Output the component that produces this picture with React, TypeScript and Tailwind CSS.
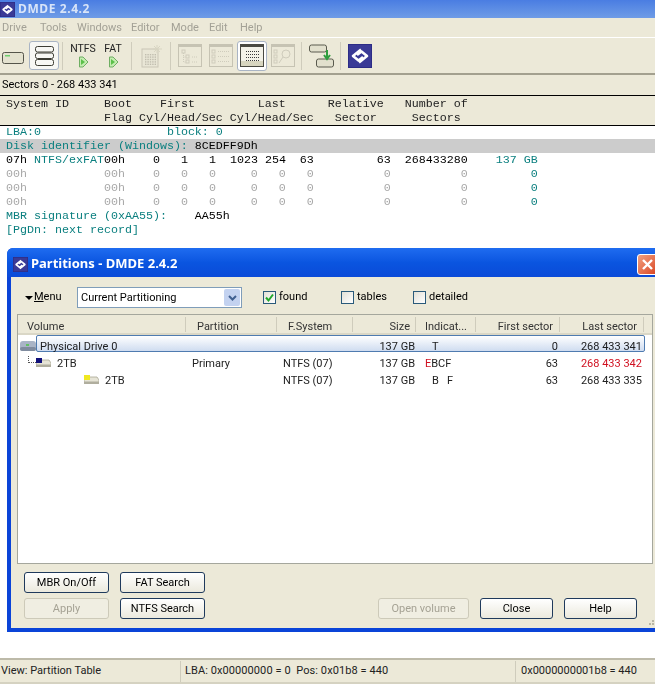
import React from "react";

const ui = { fontFamily: '"Roboto", "Noto Sans", sans-serif' };
const mono = { fontFamily: '"Liberation Mono", monospace', fontSize: "11.67px" };

type Seg = [number, string, string?];
function MonoLine({ segs, className = "" }: { segs: Seg[]; className?: string }) {
  let col = 0;
  const out: React.ReactNode[] = [];
  segs.forEach(([c, t, cls], i) => {
    const gap = " ".repeat(Math.max(0, c - col));
    out.push(<span key={i} className={cls}>{gap + t}</span>);
    col = c + t.length;
  });
  return <div className={"h-[14px] leading-[14px] pl-[6px] whitespace-pre " + className}>{out}</div>;
}

const T = "text-[#0a7f7f]";
const G = "text-[#a8a8a8]";

function Logo({ s = 24 }: { s?: number }) {
  return (
    <svg width={s} height={s} viewBox="0 0 24 24">
      <rect width="24" height="24" fill="#2c2c86" />
      <rect x="1" y="1" width="22" height="22" fill="#3a3a96" />
      <path d="M13 5.500 L5 12 L10.500 16.500 L15 13" fill="none" stroke="#fff" strokeWidth="2.600" strokeLinejoin="round" />
      <path d="M11 18.500 L19 12 L13.500 7.500 L9 11" fill="none" stroke="#fff" strokeWidth="2.600" strokeLinejoin="round" />
    </svg>
  );
}

function HddIcon() {
  return (
    <svg width="22" height="12" viewBox="0 0 22 12">
      <rect x="0.5" y="0.500" width="21" height="11" rx="2" fill="#e4e2cf" stroke="#55554a" />
      <rect x="3" y="3" width="5" height="1.500" fill="#6fcf6f" />
    </svg>
  );
}
function StackIcon() {
  return (
    <svg width="19" height="20" viewBox="0 0 19 20" fill="none" stroke="#3c3c34">
      <rect x="0.5" y="0.500" width="18" height="5.500" rx="2" />
      <rect x="0.5" y="7" width="18" height="5.500" rx="2" />
      <rect x="0.5" y="13.500" width="18" height="6" rx="2" />
    </svg>
  );
}
function Play() {
  return (
    <svg width="11" height="12" viewBox="0 0 11 12">
      <path d="M1.500 1 H5 L10 6 L5 11 H1.500 Z" fill="#c4ecb0" stroke="#6fae62" strokeLinejoin="round" />
      <path d="M3 3 L7 6 L3 9 Z" fill="#5cc04a" />
    </svg>
  );
}
function NewIcon() {
  return (
    <svg width="22" height="24" viewBox="0 0 22 24">
      <rect x="1" y="5" width="16" height="18" fill="#e9e6d6" stroke="#c9c6b6" />
      <g fill="#c0bdaf">
        {[0, 1, 2, 3, 4].map((r) =>
          [0, 1, 2, 3, 4].map((c) => <rect key={r + "-" + c} x={4 + c * 2.4} y={10 + r * 2.4} width="1.400" height="1.400" />)
        )}
      </g>
      <path d="M16 1 V9 M12 5 H21 M13 2 L19 8 M19 2 L13 8" stroke="#d8d5c2" />
    </svg>
  );
}
function ViewIcon({ kind, active }: { kind: string; active?: boolean }) {
  const edge = active ? "#4a4a42" : "#c6c3b3";
  const dot = active ? "#3a3a3a" : "#cfccbc";
  return (
    <svg width="24" height="23" viewBox="0 0 24 23">
      <rect x="0.5" y="0.500" width="23" height="22" fill={active ? "#f3f2e8" : "#ece9d8"} stroke={edge} />
      <rect x="0" y="0" width="24" height="3" fill={edge} />
      {active && <rect x="1" y="17" width="22" height="5" fill="#d8d6c0" />}
      {kind === "tree" && (
        <g fill="none" stroke={dot}>
          <rect x="4" y="6" width="3" height="3" /><rect x="8" y="11" width="3" height="3" /><rect x="8" y="16" width="3" height="3" />
          <path d="M5.500 9 V18 H8 M5.500 13 H8 M14 13 H20 M14 18 H20" strokeDasharray="1 1" />
        </g>
      )}
      {kind === "list" && (
        <g fill="none" stroke={dot}>
          <rect x="3" y="6" width="3" height="3" /><rect x="3" y="11" width="3" height="3" /><rect x="3" y="16" width="3" height="3" />
          <path d="M9 7.500 H20 M9 12.500 H20 M9 17.500 H20" strokeDasharray="1 1" />
        </g>
      )}
      {kind === "detail" && (
        <g stroke={dot}>
          <path d="M6 7.500 H19 M6 10.500 H19 M6 13.500 H19 M6 16.500 H19" strokeDasharray="1 1" />
        </g>
      )}
      {kind === "find" && (
        <g fill="none" stroke={dot}>
          <rect x="3" y="6" width="3" height="3" /><rect x="3" y="11" width="3" height="3" /><rect x="3" y="16" width="3" height="3" />
          <circle cx="15" cy="10" r="4" /><path d="M12 13 L8 19" />
        </g>
      )}
    </svg>
  );
}
function SwapIcon() {
  return (
    <svg width="25" height="24" viewBox="0 0 25 24">
      <rect x="0.5" y="1" width="17" height="7" rx="2" fill="#e2e0cd" stroke="#5a5a4e" />
      <rect x="7.500" y="15" width="17" height="8" rx="2" fill="#e2e0cd" stroke="#5a5a4e" />
      <path d="M18 6 V14 M15 11 L18 15 L21 11" fill="none" stroke="#2f9e3f" strokeWidth="2" />
    </svg>
  );
}
function Sep() {
  return <div className="w-[2px] h-[28px] border-l border-[#cfccbc]" />;
}

function XpBtn({ label, className = "", disabled }: { label: string; className?: string; disabled?: boolean }) {
  return (
    <div
      className={
        "h-[21px] pt-[2px] flex items-center justify-center rounded-[3px] border text-[11px] " +
        (disabled
          ? "border-[#cdcab9] text-[#a5a294] bg-[#f0eee2] "
          : "border-[#1f3a5c] text-black bg-gradient-to-b from-white to-[#ebe9dd] ") +
        className
      }
    >
      {label}
    </div>
  );
}
function Check({ on }: { on?: boolean }) {
  return (
    <div className="w-[13px] h-[13px] border border-[#2a5a7a] bg-gradient-to-br from-[#e2e0d6] to-white flex items-center justify-center">
      {on && (
        <svg width="11" height="11" viewBox="0 0 11 11">
          <path d="M2 5.500 L4.500 8.500 L9 2.500" fill="none" stroke="#22a82a" strokeWidth="2" />
        </svg>
      )}
    </div>
  );
}
function Vol({ color }: { color: string }) {
  return (
    <svg width="15" height="9" viewBox="0 0 15 9">
      <path d="M2 2 H13 L15 5 V9 H0 V5 Z" fill="#e6e4d6" stroke="#a9a795" strokeWidth="0.800" />
      <rect x="0" y="6.500" width="15" height="2.500" fill="#b0ae9e" />
      <rect x="0" y="0" width="6" height="5" fill={color} />
    </svg>
  );
}

const cols = "grid grid-cols-[168px_91px_76px_63px_60px_84px_84px_1fr]";
const head = "pt-[2px] border-r border-[#cfccbc] h-[15px] leading-[15px]";
const row = " h-[17px] pt-[4px] items-center text-[#222]";

export default function App() {
  return (
    <div className="w-[655px] h-[686px] overflow-hidden bg-white relative text-black" style={ui}>
      {/* main title */}
      <div className="h-[18px] bg-gradient-to-b from-[#4a7de2] to-[#6f9ce6] flex items-center">
        <Logo s={15} />
        <span className="ml-[3px] text-[12px] font-bold tracking-[0.6px] text-[#d8e4f8]" style={{ fontFamily: '"Noto Sans", sans-serif' }}>DMDE 2.4.2</span>
      </div>
      {/* menu */}
      <div className="h-[19px] pt-[1px] bg-[#ece9d8] flex items-center pl-[2px] text-[11px] text-[#a3a196]">
        <span className="w-[38px]">Drive</span>
        <span className="w-[37px]">Tools</span>
        <span className="w-[54px]">Windows</span>
        <span className="w-[40px]">Editor</span>
        <span className="w-[38px]">Mode</span>
        <span className="w-[31px]">Edit</span>
        <span>Help</span>
      </div>
      {/* toolbar */}
      <div className="h-[38px] bg-[#ece9d8] border-t border-white border-b-2 border-b-[#a3a08f] flex items-center pl-[2px]">
        <div className="mt-[4px]"><HddIcon /></div>
        <div className="ml-[5px] w-[30px] h-[29px] rounded-[3px] border border-[#a9b4c4] bg-[#f7f7f4] flex items-center justify-center"><StackIcon /></div>
        <div className="ml-[3px]"><Sep /></div>
        <div className="ml-[6px] w-[26px] flex flex-col items-center text-[10.500px] leading-[11px] text-[#222]"><span>NTFS</span><span className="mt-[2px] h-[12px]"><Play /></span></div>
        <div className="ml-[5px] w-[24px] flex flex-col items-center text-[10.500px] leading-[11px] text-[#222]"><span>FAT</span><span className="mt-[2px] h-[12px]"><Play /></span></div>
        <div className="ml-[6px]"><Sep /></div>
        <div className="ml-[8px]"><NewIcon /></div>
        <div className="ml-[7px]"><Sep /></div>
        <div className="ml-[6px]"><ViewIcon kind="tree" /></div>
        <div className="ml-[7px]"><ViewIcon kind="list" /></div>
        <div className="ml-[4px] w-[30px] h-[30px] rounded-[3px] border border-[#a9b4c4] bg-white flex items-center justify-center"><ViewIcon kind="detail" active /></div>
        <div className="ml-[4px]"><ViewIcon kind="find" /></div>
        <div className="ml-[6px]"><Sep /></div>
        <div className="ml-[6px]"><SwapIcon /></div>
        <div className="ml-[6px]"><Sep /></div>
        <div className="ml-[6px]"><Logo s={24} /></div>
      </div>
      {/* sectors */}
      <div className="h-[20px] bg-[#ece9d8] flex items-center pl-[2px] text-[11px]">Sectors 0 - 268 433 341</div>
      {/* table head */}
      <div style={mono}>
        <div className="h-[31px] bg-[#ece9d8] border-y border-black pt-[1px] text-[#222]">
          <MonoLine segs={[[0, "System ID"], [14, "Boot"], [22, "First"], [36, "Last"], [46, "Relative"], [57, "Number of"]]} />
          <MonoLine segs={[[14, "Flag"], [19, "Cyl/Head/Sec"], [32, "Cyl/Head/Sec"], [47, "Sector"], [58, "Sectors"]]} />
        </div>
        <div className="-mt-[1px]">
          <MonoLine segs={[[0, "LBA:0", T], [23, "block: 0", T]]} />
          <MonoLine className="bg-[#cccccc]" segs={[[0, "Disk identifier (Windows):", T], [27, "8CEDFF9Dh"]]} />
          <MonoLine segs={[[0, "07h"], [4, "NTFS/exFAT", T], [14, "00h"], [21, "0"], [25, "1"], [29, "1"], [32, "1023"], [37, "254"], [42, "63"], [53, "63"], [57, "268433280"], [70, "137 GB", T]]} />
          {[0, 1, 2].map((i) => (
            <MonoLine key={i} segs={[[0, "00h", G], [14, "00h", G], [21, "0", G], [25, "0", G], [29, "0", G], [35, "0", G], [39, "0", G], [43, "0", G], [54, "0", G], [65, "0", G], [75, "0", T]]} />
          ))}
          <MonoLine segs={[[0, "MBR signature (0xAA55):", T], [27, "AA55h"]]} />
          <MonoLine segs={[[0, "[PgDn: next record]", T]]} />
        </div>
      </div>

      {/* dialog */}
      <div className="absolute left-[7px] top-[248px] w-[668px] h-[384px] rounded-t-[6px] bg-[#0a44d8] flex flex-col px-[4px] pb-[4px] overflow-hidden">
        <div className="h-[29px] pt-[3px] -mx-[4px] bg-gradient-to-b from-[#1f6cf0] via-[#0a55e0] to-[#0a4ad8] flex items-center pl-[6px] shrink-0">
          <Logo s={15} />
          <span className="ml-[3px] text-[13px] font-bold text-white" style={{ fontFamily: '"Noto Sans", sans-serif' }}>Partitions - DMDE 2.4.2</span>
        </div>
        <div className="flex-1 bg-[#ece9d8] flex flex-col relative">
          {/* controls */}
          <div className="h-[37px] pt-[4px] flex items-center text-[11px] shrink-0">
            <span className="ml-[14px] w-0 h-0 border-x-[4px] border-x-transparent border-t-[4px] border-t-black" />
            <span className="ml-[1px] w-[18px]"><u>M</u>enu</span>
            <div className="ml-[25px] w-[165px] h-[21px] border border-[#7f9db9] bg-white flex items-center pl-[3px] pr-[1px]">
              <span className="flex-1 pt-[1px]">Current Partitioning</span>
              <span className="w-[16px] h-[17px] bg-[#c3d2f0] rounded-[2px] flex items-center justify-center">
                <svg width="9" height="6" viewBox="0 0 9 6"><path d="M1 1 L4.500 4.500 L8 1" fill="none" stroke="#3f5f90" strokeWidth="2" /></svg>
              </span>
            </div>
            <div className="ml-[21px] flex items-center gap-[3px] w-[78px]"><Check on /><span>found</span></div>
            <div className="flex items-center gap-[3px] w-[72px]"><Check /><span>tables</span></div>
            <div className="flex items-center gap-[3px]"><Check /><span>detailed</span></div>
          </div>
          {/* list */}
          <div className="ml-[6px] w-[636px] h-[250px] border border-[#a5a79d] bg-white text-[11px] shrink-0">
            <div className={cols + " h-[20px] bg-[#ece9d8] items-center text-[#333] border-b-2 border-[#dad7c6]"}>
              <span className={"pl-[9px] " + head}>Volume</span>
              <span className={"pl-[11px] " + head}>Partition</span>
              <span className={"pl-[11px] " + head}>F.System</span>
              <span className={"text-right pr-[5px] " + head}>Size</span>
              <span className={"pl-[9px] " + head}>Indicat...</span>
              <span className={"text-right pr-[6px] " + head}>First sector</span>
              <span className={"text-right pr-[6px] " + head}>Last sector</span>
              <span />
            </div>
            <div className="relative">
              <div className={cols + row}>
                <div className="flex items-center pl-[2px] relative">
                  <svg width="16" height="10" viewBox="0 0 16 10" className="shrink-0 -mt-[3px]"><rect width="16" height="10" rx="3" fill="#a9b4c6" /><rect y="6" width="16" height="4" rx="2" fill="#7f8b9e" /><rect x="6" y="3" width="3" height="2" fill="#62c062" /></svg>
                  <span className="ml-[4px]">Physical Drive 0</span>
                </div>
                <span /><span />
                <span className="text-right pr-[1px]">137 GB</span>
                <span className="pl-[16px]">T</span>
                <span className="text-right pr-[2px]">0</span>
                <span className="text-right pr-[2px]">268 433 341</span>
                <span />
              </div>
              <div className="absolute left-[18px] top-0 w-[609px] h-[17px] rounded-[2px] border border-[#4f7bb0] bg-gradient-to-b from-white to-[#cfdcf0] pointer-events-none mix-blend-multiply" />
            </div>
            <div className={cols + row}>
              <div className="flex items-center pl-[10px]">
                <div className="w-[8px] h-[7px] -mt-[9px] border-l border-b border-dotted border-[#555]" />
                <div className="-mt-[3px]"><Vol color="#10107a" /></div>
                <span className="ml-[6px]">2TB</span>
              </div>
              <span className="pl-[6px]">Primary</span>
              <span className="pl-[6px]">NTFS (07)</span>
              <span className="text-right pr-[1px]">137 GB</span>
              <span className="pl-[9px]"><span className="text-[#d01020]">E</span>BCF</span>
              <span className="text-right pr-[2px]">63</span>
              <span className="text-right pr-[2px] text-[#d01020]">268 433 342</span>
              <span />
            </div>
            <div className={cols + row}>
              <div className="flex items-center pl-[66px]">
                <div className="-mt-[3px]"><Vol color="#f0e820" /></div>
                <span className="ml-[6px]">2TB</span>
              </div>
              <span className="pl-[6px]" />
              <span className="pl-[6px]">NTFS (07)</span>
              <span className="text-right pr-[1px]">137 GB</span>
              <span className="pl-[16px] whitespace-pre">B   F</span>
              <span className="text-right pr-[2px]">63</span>
              <span className="text-right pr-[2px]">268 433 335</span>
              <span />
            </div>
          </div>
          {/* buttons */}
          <div className="flex mt-[8px] ml-[13px] gap-[11px]">
            <div className="flex flex-col gap-[5px] w-[85px]">
              <XpBtn label="MBR On/Off" />
              <XpBtn label="Apply" disabled />
            </div>
            <div className="flex flex-col gap-[5px] w-[85px]">
              <XpBtn label="FAT Search" />
              <XpBtn label="NTFS Search" />
            </div>
            <div className="flex items-end ml-[162px] gap-[11px]">
              <XpBtn label="Open volume" disabled className="w-[91px]" />
              <XpBtn label="Close" className="w-[73px]" />
              <XpBtn label="Help" className="w-[73px]" />
            </div>
          </div>
        </div>
        <div className="absolute left-[630px] top-[6px] w-[21px] h-[21px] rounded-[3px] border border-white bg-gradient-to-br from-[#f0a080] to-[#d8401c] flex items-center justify-center">
          <svg width="13" height="13" viewBox="0 0 13 13"><path d="M2 2 L11 11 M11 2 L2 11" stroke="#fff" strokeWidth="2.400" /></svg>
        </div>
        <svg width="8" height="8" viewBox="0 0 8 8" className="absolute left-[640px] top-[372px]" fill="#b8b5a4">
          <rect x="5" y="0" width="2" height="2" /><rect x="2" y="3" width="2" height="2" /><rect x="5" y="3" width="2" height="2" />
        </svg>
      </div>

      {/* status */}
      <div className="absolute left-0 right-0 top-[658px] h-[26px] pt-[1px] bg-[#ece9d8] border-t-2 border-[#bdbaa9] border-b-2 border-b-[#d5d2c1] flex items-center text-[11px] text-[#222]">
        <span className="w-[180px] pl-[1px]">View: Partition Table</span>
        <span className="w-[335px] pl-[4px] h-full border-l border-[#cfccbc] flex items-center whitespace-pre tracking-[0.08px]">LBA: 0x00000000 = 0  Pos: 0x01b8 = 440</span>
        <span className="pl-[5px] h-full border-l border-[#cfccbc] flex items-center">0x0000000001b8 = 440</span>
      </div>
    </div>
  );
}
